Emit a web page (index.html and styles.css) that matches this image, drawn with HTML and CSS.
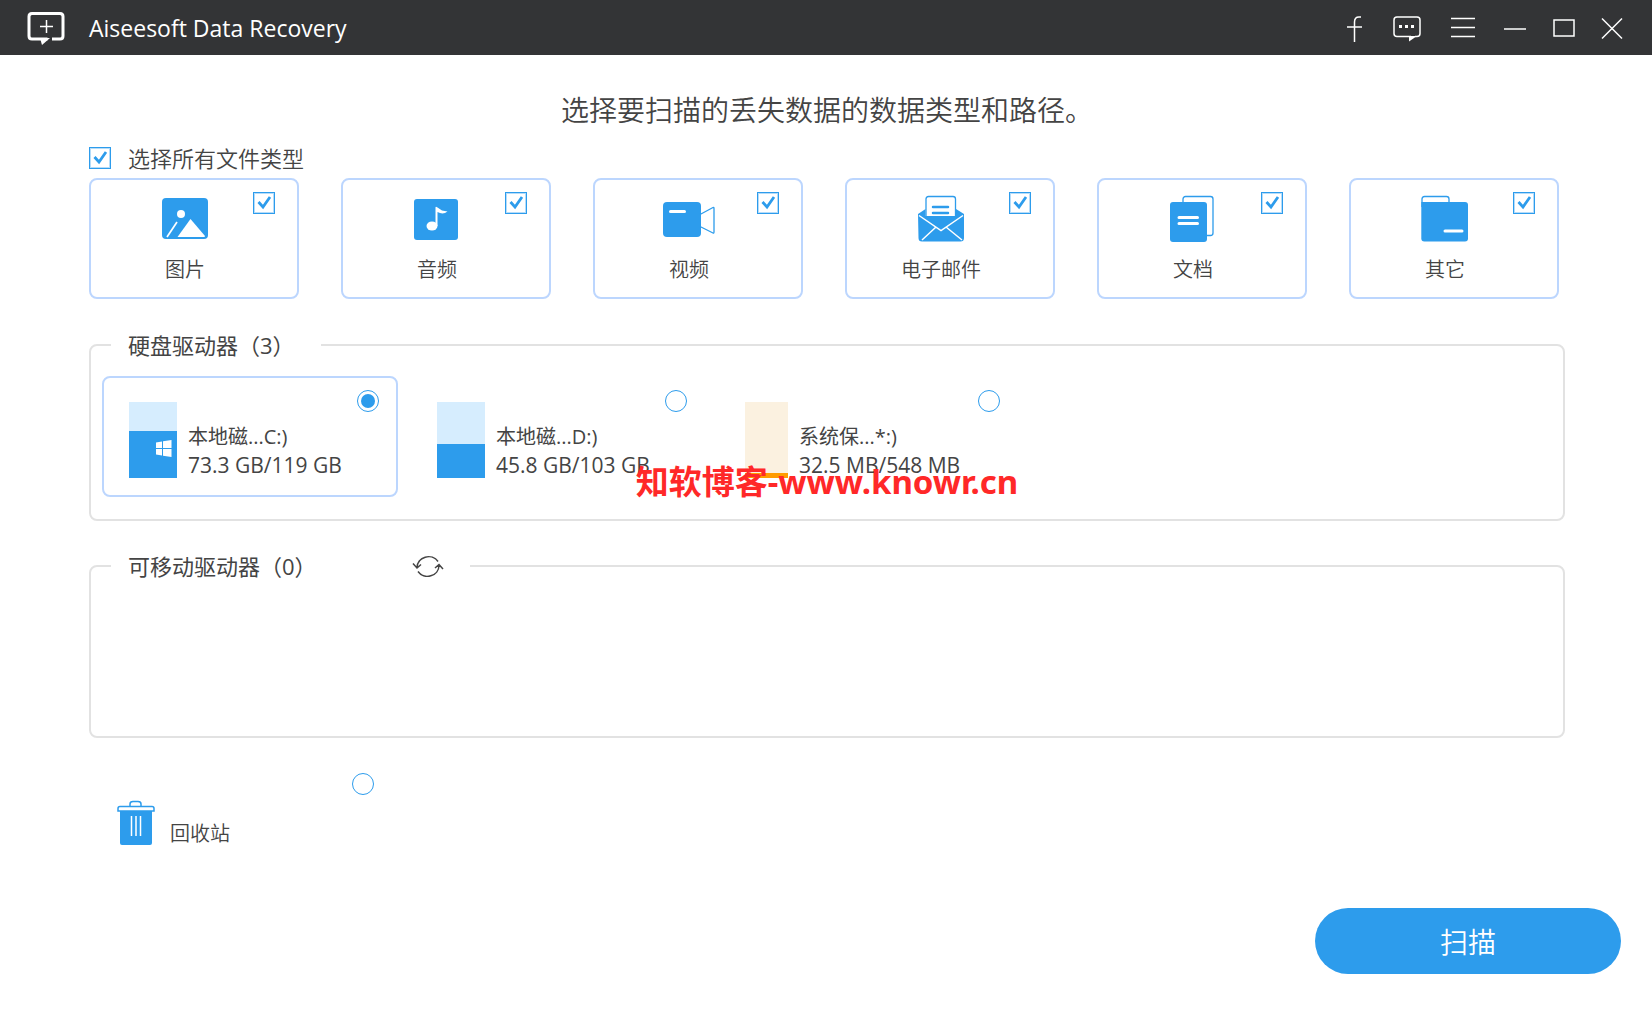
FILE: index.html
```html
<!DOCTYPE html>
<html lang="zh-CN">
<head>
<meta charset="utf-8">
<meta name="viewport" content="width=device-width, initial-scale=1">
<title>Aiseesoft Data Recovery</title>
<link rel="stylesheet" href="styles.css">
</head>
<body>
<header class="titlebar">
  <svg class="logo" width="40" height="34" viewBox="0 0 40 34" aria-hidden="true">
    <path d="M21.500 28H12M26 28H34Q37 28 37 25V5.500Q37 2.500 34 2.500H6Q3 2.500 3 5.500V25Q3 28 6 28H14" fill="none" stroke="#fff" stroke-width="3"/>
    <path d="M14 27H24L16 34Z" fill="#fff"/>
    <path d="M20.500 9V22M14 15.500H27" stroke="#fff" stroke-width="1.500"/>
  </svg>
  <span class="app-name">Aiseesoft Data Recovery</span>
  <div class="window-tools">
    <button type="button" aria-label="Facebook"><svg width="20" height="28" viewBox="0 0 20 28"><path d="M16 3H14Q9.500 3 9.500 8V28M2 13H17" /></svg></button>
    <button type="button" aria-label="反馈"><svg width="32" height="28" viewBox="0 0 32 28"><path d="M20 22.500H6Q3 22.500 3 19.500V6Q3 3 6 3H26Q29 3 29 6V19.500Q29 22.500 26 22.500H24"/><path class="solid" d="M18 22H26L18 27.500ZM8 11h3v3h-3zM14 11h3v3h-3zM20 11h3v3h-3z"/></svg></button>
    <button type="button" aria-label="菜单"><svg width="28" height="28" viewBox="0 0 28 28"><path d="M2 4.500H26M2 13.500H26M2 22.500H26"/></svg></button>
    <button type="button" aria-label="最小化"><svg width="24" height="28" viewBox="0 0 24 28"><path d="M1 15H23"/></svg></button>
    <button type="button" aria-label="最大化"><svg width="22" height="28" viewBox="0 0 22 28"><rect x="1" y="6" width="20" height="16"/></svg></button>
    <button type="button" aria-label="关闭"><svg width="24" height="28" viewBox="0 0 24 28"><path d="M1 4.500L21 24.500M21 4.500L1 24.500"/></svg></button>
  </div>
</header>

<main class="content">
  <h1 class="heading">选择要扫描的丢失数据的数据类型和路径。</h1>

  <label class="select-all"><input class="check" type="checkbox" checked>选择所有文件类型</label>

  <div class="types">
    <label class="type">
      <span class="type-body">
        <svg width="54" height="48" viewBox="0 0 54 48"><rect x="4" y="3" width="46" height="41" rx="4" fill="#2d9cec"/><circle cx="23" cy="19" r="4" fill="#fff"/><path d="M19.500 42L32.500 24L47 41L46.500 42Z" fill="#fff"/><path d="M9 42L19 27" stroke="#fff" stroke-width="1.700"/></svg>
        <span>图片</span>
      </span>
      <input class="check" type="checkbox" checked>
    </label>
    <label class="type">
      <span class="type-body">
        <svg width="54" height="48" viewBox="0 0 54 48"><rect x="4" y="4" width="44" height="41" rx="3" fill="#2d9cec"/><ellipse cx="22" cy="31" rx="5.500" ry="4.500" fill="#fff"/><path d="M25.500 31V12.500Q25.500 11 27.500 12.500L32 15.500L37.500 16.500Q33 20 27.500 17V31Z" fill="#fff"/></svg>
        <span>音频</span>
      </span>
      <input class="check" type="checkbox" checked>
    </label>
    <label class="type">
      <span class="type-body">
        <svg width="54" height="48" viewBox="0 0 54 48"><rect x="1" y="7" width="38" height="35" rx="4" fill="#2d9cec"/><path d="M8.500 16.500H22.500" stroke="#fff" stroke-width="3" stroke-linecap="round"/><path d="M38 19.500L51 12.500Q52 12 52 13.500V37Q52 38.500 51 38L38 31.500" fill="none" stroke="#2d9cec" stroke-width="1.300"/></svg>
        <span>视频</span>
      </span>
      <input class="check" type="checkbox" checked>
    </label>
    <label class="type">
      <span class="type-body">
        <svg width="54" height="48" viewBox="0 0 54 48"><path d="M4 19L11.500 14V21H42V14L50 19V43Q50 46.500 46.500 46.500H8Q4.500 46.500 4.500 43Z" fill="#2d9cec"/><path d="M12 21V4Q12 1.500 14.500 1.500H39Q41.500 1.500 41.500 4V21" fill="#fff" stroke="#2d9cec" stroke-width="1.300"/><path d="M19 12H34M19 18H34" stroke="#2d9cec" stroke-width="2.500" stroke-linecap="round"/><path d="M12 21H41.500L27 32Z" fill="#2d9cec"/><path d="M5 20.500L27 35.500L49 20.500M8 45L22 32M32 32L48 45" fill="none" stroke="#fff" stroke-width="1.500"/></svg>
        <span>电子邮件</span>
      </span>
      <input class="check" type="checkbox" checked>
    </label>
    <label class="type">
      <span class="type-body">
        <svg width="54" height="48" viewBox="0 0 54 48"><rect x="17" y="1.500" width="30" height="39" rx="2.500" fill="#fff" stroke="#2d9cec" stroke-width="1.300"/><rect x="4" y="7" width="37" height="40" rx="3" fill="#2d9cec"/><path d="M13 22.500H31.500M13 28.500H31.500" stroke="#fff" stroke-width="3" stroke-linecap="round"/></svg>
        <span>文档</span>
      </span>
      <input class="check" type="checkbox" checked>
    </label>
    <label class="type">
      <span class="type-body">
        <svg width="54" height="48" viewBox="0 0 54 48"><path d="M4 12V4Q4 1.500 6.500 1.500H28.500Q31 1.500 31 4V9" fill="#fff" stroke="#2d9cec" stroke-width="1.300"/><path d="M3.300 7H47Q50 7 50 10V43.500Q50 46.500 47 46.500H6.300Q3.300 46.500 3.300 43.500Z" fill="#2d9cec"/><path d="M27 36H44" stroke="#fff" stroke-width="3" stroke-linecap="round"/></svg>
        <span>其它</span>
      </span>
      <input class="check" type="checkbox" checked>
    </label>
  </div>

  <fieldset class="group">
    <legend class="group-title">硬盘驱动器（3）</legend>
    <div class="drives">
      <label class="drive">
        <span class="usage" style="--used: 62%">
          <svg width="16" height="18" viewBox="0 0 16 18" fill="#fff" aria-hidden="true"><path d="M0 2.500L6 1.500V8H0ZM7 1.300L15.500 0V8H7ZM0 9H6V15.500L0 14.500ZM7 9H15.500V17L7 15.700Z"/></svg>
        </span>
        <span class="drive-text"><span class="drive-name">本地磁...C:)</span><span class="drive-size">73.3 GB/119 GB</span></span>
        <input class="radio" type="radio" name="location" checked>
      </label>
      <label class="drive">
        <span class="usage" style="--used: 45%"></span>
        <span class="drive-text"><span class="drive-name">本地磁...D:)</span><span class="drive-size">45.8 GB/103 GB</span></span>
        <input class="radio" type="radio" name="location">
      </label>
      <label class="drive drive-system">
        <span class="usage" style="--used: 6%"></span>
        <span class="drive-text"><span class="drive-name">系统保...*:)</span><span class="drive-size">32.5 MB/548 MB</span></span>
        <input class="radio" type="radio" name="location">
      </label>
    </div>
    <div class="watermark">知软博客-www.knowr.cn</div>
  </fieldset>

  <fieldset class="group">
    <legend class="group-title">可移动驱动器（0）
      <button class="refresh" type="button" aria-label="刷新"><svg width="32" height="24" viewBox="0 0 32 24" fill="none" stroke="#444" stroke-width="1.500"><path d="M26 7.500A11.500 11 0 0 0 5 13.500M6 17.500A11.500 11 0 0 0 27 11.500M1 9.500L5 14L9 10.500M23 14L27 10.500L31 15"/></svg></button>
    </legend>
    <div class="removable"></div>
  </fieldset>

  <label class="recycle">
    <svg width="38" height="46" viewBox="0 0 38 46" aria-hidden="true"><path d="M3 10H35V43Q35 45 33 45H5Q3 45 3 43Z" fill="#2d9cec"/><path d="M13 6V4Q13 1.500 16 1.500H21Q24 1.500 24 4V6M1 11V8.500Q1 6.500 3 6.500H35Q37 6.500 37 8.500V11Z" fill="#fff" stroke="#2d9cec" stroke-width="1.500"/><path d="M14.500 16V36M19 16V36M23.500 16V36" stroke="#fff" stroke-width="1.500"/></svg>
    <span>回收站</span>
    <input class="radio" type="radio" name="location">
  </label>
</main>

<footer class="actions"><button class="scan" type="button">扫描</button></footer>
</body>
</html>
```
FILE: styles.css
```css
* { box-sizing: border-box; }

body {
  margin: 0;
  background: #fff;
  color: #444;
  font-family: "Open Sans", "Noto Sans CJK SC", sans-serif;
  font-size: 20px;
}

button { padding: 0; border: 0; background: none; font: inherit; cursor: pointer; }
svg { display: block; flex: none; }
input { flex: none; margin: 0; }

/* Title bar */
.titlebar {
  display: flex;
  align-items: center;
  height: 55px;
  padding: 0 27px 0 26px;
  background: #333436;
  color: #fff;
}
.app-name { margin-left: 23px; font-size: 23px; line-height: 32px; }
.window-tools { display: flex; gap: 26px; margin-left: auto; }
.window-tools svg { fill: none; stroke: #fff; stroke-width: 1.500; }
.window-tools .solid { fill: #fff; stroke: none; }

/* Page */
.content { padding: 35px 87px 0 89px; }
.heading {
  margin: 0 0 15px;
  font-size: 28px;
  font-weight: 350;
  line-height: 40px;
  text-align: center;
}
.select-all {
  display: flex;
  align-items: center;
  gap: 17px;
  width: max-content;
  font-size: 22px;
  font-weight: 350;
  line-height: 26px;
}

/* Tick boxes and radio buttons */
.check {
  appearance: none;
  width: 22px;
  height: 22px;
  border: 1px solid #2d9cec;
  background: #fff url("data:image/svg+xml,%3Csvg xmlns='http://www.w3.org/2000/svg' viewBox='0 0 20 20'%3E%3Cpath d='M4.500 9L9 14L16 4' fill='none' stroke='%232d9cec' stroke-width='2.800'/%3E%3C/svg%3E") center / 20px 20px no-repeat;
  box-shadow: inset 0 0 0 1px #b5dcf9;
}
.check:not(:checked) { background-image: none; }
.radio {
  appearance: none;
  width: 22px;
  height: 22px;
  padding: 3px;
  border: 1px solid #2d9cec;
  border-radius: 50%;
}
.radio:checked { background: #2d9cec content-box; }

/* File types */
.types {
  display: grid;
  grid-template-columns: repeat(6, 1fr);
  gap: 42px;
  margin: 7px 6px 31px 0;
}
.type {
  display: grid;
  grid-template-columns: 1fr 22px;
  align-items: start;
  height: 121px;
  padding: 12px 22px 0 26px;
  border: 2px solid #bcd6fe;
  border-radius: 8px;
}
.type-body {
  display: flex;
  flex-direction: column;
  align-items: center;
  gap: 13px;
  padding-top: 3px;
  font-weight: 350;
  line-height: 28px;
}

/* Drive groups */
.group {
  position: relative;
  min-width: 0;
  margin: 0 0 30px;
  padding: 16px 11px 22px;
  border: 2px solid #e2e2e2;
  border-radius: 8px;
}
.group-title {
  display: flex;
  align-items: center;
  gap: 95px;
  margin-left: 9px;
  padding: 0 26px 0 17px;
  font-size: 22px;
  line-height: 30px;
}
.drives { display: flex; gap: 12px; }
.drive {
  display: flex;
  align-items: flex-end;
  gap: 11px;
  width: 296px;
  height: 121px;
  padding: 12px 17px 17px 25px;
  border: 2px solid transparent;
  border-radius: 8px;
}
.drive:has(:checked) { border-color: #bcd6fe; }
.drive .radio, .recycle .radio { align-self: flex-start; margin-left: auto; }
.drive-text { flex: 1; margin-bottom: -2px; white-space: nowrap; }
.drive-text + .radio { margin-left: -33px; }
.drive-name, .drive-size { display: block; line-height: 29px; }
.drive-size { font-size: 21px; }
.usage {
  display: flex;
  flex: none;
  align-items: flex-end;
  justify-content: flex-end;
  width: 48px;
  height: 76px;
  padding: 0 5px 20px;
  background: linear-gradient(to top, #2d9cec var(--used), #d6edfe var(--used));
}
.drive-system { width: 301px; }
.drive-system .usage {
  width: 43px;
  background: linear-gradient(to top, #ff9c00 var(--used), #fbf1e0 var(--used));
}
.watermark {
  position: absolute;
  top: 102px;
  right: 0;
  left: 0;
  color: #ff2828;
  font-family: "Noto Sans", "Noto Sans CJK SC", sans-serif;
  font-size: 33px;
  font-weight: 700;
  line-height: 40px;
  text-align: center;
  pointer-events: none;
}
.removable { min-height: 117px; }

/* Recycle bin */
.recycle {
  display: flex;
  align-items: flex-end;
  gap: 15px;
  width: 296px;
  height: 122px;
  margin: -10px 0 28px 8px;
  padding: 15px 19px 34px 20px;
  font-weight: 350;
  line-height: 24px;
}

.actions { display: flex; justify-content: flex-end; padding: 0 31px 39px; }
.scan {
  width: 306px;
  height: 66px;
  border-radius: 33px;
  background: #2d9cec;
  color: #fff;
  font-size: 28px;
  font-weight: 350;
}
```
